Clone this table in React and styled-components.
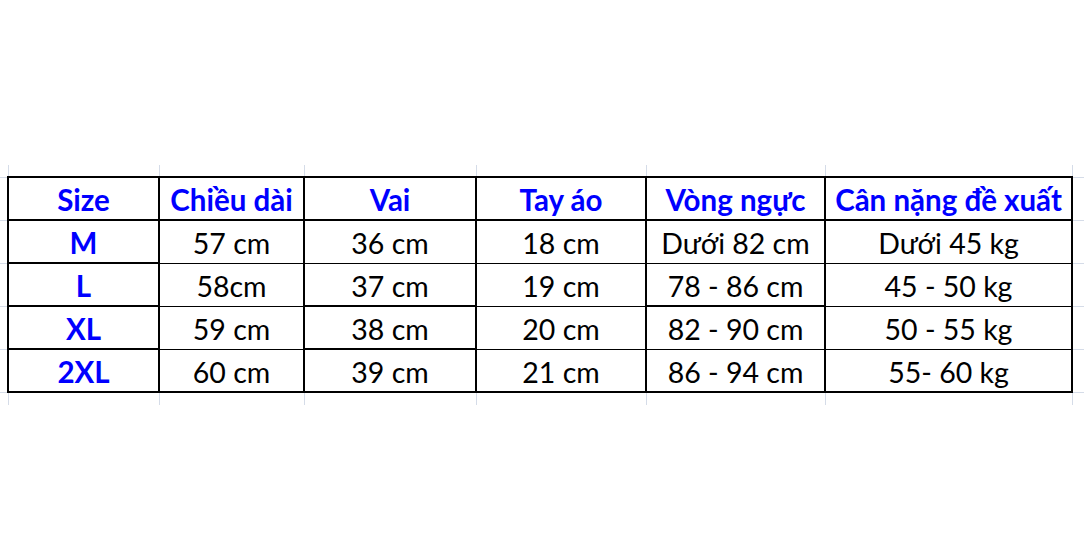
import React from 'react';
import styled, { createGlobalStyle } from 'styled-components';

const GlobalStyle = createGlobalStyle`
  html, body {
    margin: 0;
    padding: 0;
    background: #fff;
  }
  body {
    font-family: Lato, "Noto Sans", "Liberation Sans", sans-serif;
  }
`;

const GRID = '#d5dce8';
const INK = '#000';
const BLUE = '#0000ff';

// column widths of the sheet, margin columns included
const widths = [8, 151, 145, 172, 170, 179, 247, 12];

const header = ['Size', 'Chiều dài', 'Vai', 'Tay áo', 'Vòng ngực', 'Cân nặng đề xuất'];

const rows = [
  { size: 'M', values: ['57 cm', '36 cm', '18 cm', 'Dưới 82 cm', 'Dưới 45 kg'], thick: [true, false, false, false, false, false] },
  { size: 'L', values: ['58cm', '37 cm', '19 cm', '78 - 86 cm', '45 - 50 kg'], thick: [true, false, true, false, true, false] },
  { size: 'XL', values: ['59 cm', '38 cm', '20 cm', '82 - 90 cm', '50 - 55 kg'], thick: [true, false, true, false, false, false] },
  { size: '2XL', values: ['60 cm', '39 cm', '21 cm', '86 - 94 cm', '55- 60 kg'], thick: [true, true, true, true, true, true] },
];

const Page = styled.div`
  width: 1084px;
  height: 560px;
  padding-top: 165px;
  box-sizing: border-box;
  overflow: hidden;
`;

const Sheet = styled.table`
  width: 1084px;
  border-collapse: collapse;
  table-layout: fixed;
`;

const Filler = styled.tr`
  height: ${({ $h }) => $h}px;
`;

const Row = styled.tr`
  height: 43px;
`;

const GridCell = styled.td`
  padding: 0;
  border-left: ${({ $sides }) => ($sides ? `1px solid ${GRID}` : 'none')};
  border-right: ${({ $sides }) => ($sides ? `1px solid ${GRID}` : 'none')};
  border-top: ${({ $flat }) => ($flat ? `1px solid ${GRID}` : 'none')};
  border-bottom: ${({ $flat }) => ($flat ? `1px solid ${GRID}` : 'none')};
`;

const Cell = styled.td`
  padding: 3px 0 0;
  text-align: center;
  vertical-align: middle;
  white-space: nowrap;
  overflow: hidden;
  font-size: 28.5px;
  line-height: 1;
  color: ${INK};
  border-left: 2px solid ${INK};
  border-right: 2px solid ${INK};
  border-top: ${({ $top }) => ($top ? 2 : 1)}px solid ${INK};
  border-bottom: ${({ $bottom }) => ($bottom ? 2 : 1)}px solid ${INK};
`;

const HeadCell = styled(Cell)`
  font-size: 29.5px;
  font-weight: 700;
  color: ${BLUE};
`;

const SizeCell = styled(Cell)`
  font-size: 29.5px;
  font-weight: 700;
  color: ${BLUE};
`;

const GridRow = ({ h }) => (
  <Filler $h={h}>
    <GridCell />
    {header.map((_, i) => (
      <GridCell key={i} $sides />
    ))}
    <GridCell />
  </Filler>
);

export default function App() {
  return (
    <Page>
      <GlobalStyle />
      <Sheet>
        <colgroup>
          {widths.map((w, i) => (
            <col key={i} style={{ width: w }} />
          ))}
        </colgroup>
        <tbody>
          <GridRow h={12} />
          <Row>
            <GridCell $flat />
            {header.map((h) => (
              <HeadCell key={h} $top $bottom>
                {h}
              </HeadCell>
            ))}
            <GridCell $flat />
          </Row>
          {rows.map((r) => (
            <Row key={r.size}>
              <GridCell $flat />
              <SizeCell $bottom={r.thick[0]}>{r.size}</SizeCell>
              {r.values.map((v, i) => (
                <Cell key={i} $bottom={r.thick[i + 1]}>
                  {v}
                </Cell>
              ))}
              <GridCell $flat />
            </Row>
          ))}
          <GridRow h={13} />
        </tbody>
      </Sheet>
    </Page>
  );
}
